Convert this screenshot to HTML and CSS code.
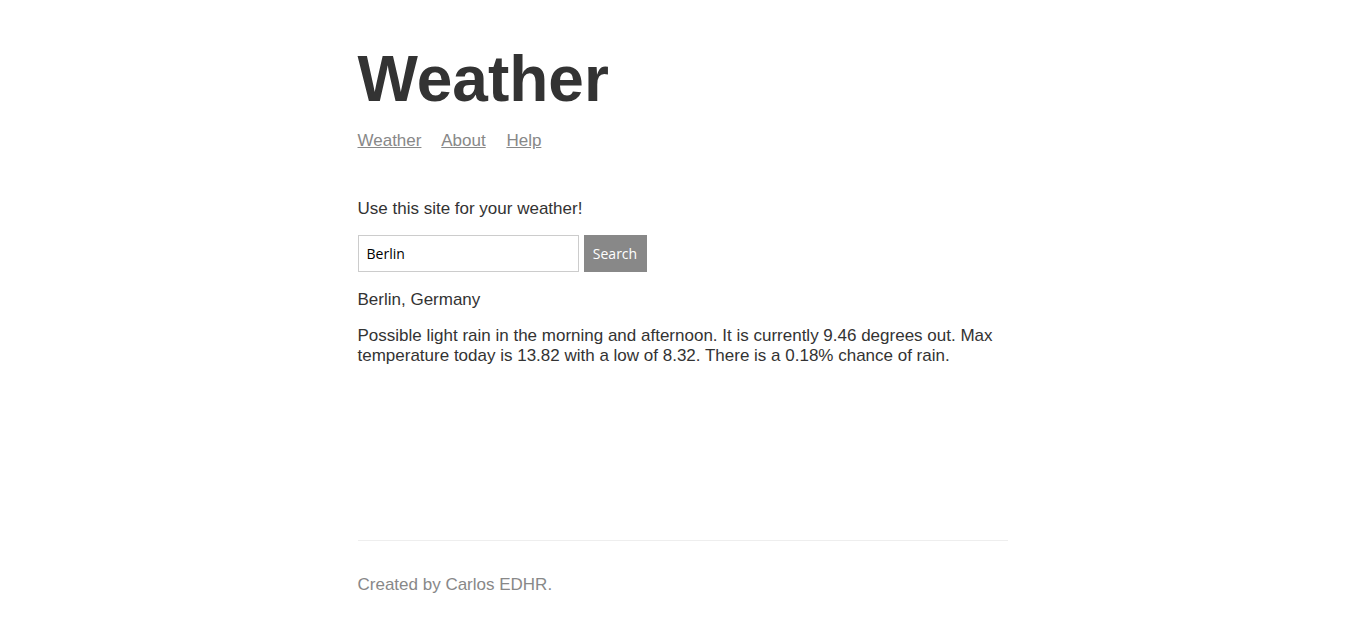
FILE: index.html
```html
<!DOCTYPE html>
<html lang="en">
<head>
<meta charset="utf-8">
<title>Weather</title>
<link rel="stylesheet" href="styles.css">
</head>
<body>
<div class="main-content">
  <header class="header">
    <h1 class="title">Weather</h1>
    <nav class="nav">
      <a class="nav-link" href="#">Weather</a>
      <a class="nav-link" href="#">About</a>
      <a class="nav-link" href="#">Help</a>
    </nav>
  </header>
  <p class="text">Use this site for your weather!</p>
  <form class="search-form">
    <input class="search-input" type="text" value="Berlin" placeholder="Location">
    <button class="search-button" type="button">Search</button>
  </form>
  <p class="text">Berlin, Germany</p>
  <p class="text">Possible light rain in the morning and afternoon. It is currently 9.46 degrees out. Max temperature today is 13.82 with a low of 8.32. There is a 0.18% chance of rain.</p>
</div>
<footer class="footer">
  <p class="footer-text">Created by Carlos EDHR.</p>
</footer>
</body>
</html>
```

FILE: styles.css
```css
html, body {
  background: #ffffff;
}

body {
  color: #333333;
  font-family: "Liberation Sans", Arial, sans-serif;
  font-size: 17px;
  max-width: 650px;
  margin: 0 auto;
  padding: 0 16px;
  display: flex;
  flex-direction: column;
  min-height: 100vh;
}

.main-content {
  flex-grow: 1;
}

.header {
  margin-top: 16px;
  margin-bottom: 48px;
}

.title {
  font-size: 64px;
  font-weight: bold;
  margin: 42px 0 15px;
}

.nav-link {
  color: #888888;
  margin-right: 16px;
  text-decoration: underline;
}

.text {
  margin: 16px 0;
}

.search-form {
  display: flex;
  align-items: flex-start;
  gap: 5px;
  height: 38.5px;
}

.search-input {
  box-sizing: border-box;
  width: 221px;
  height: 37px;
  border: 1px solid #cccccc;
  padding: 8px;
  margin: 0;
  font-family: "Open Sans", "Noto Sans", sans-serif;
  font-size: 14px;
  color: #000000;
  outline: none;
}

.search-button {
  box-sizing: border-box;
  height: 37px;
  width: 63px;
  border: 1px solid #888888;
  background: #888888;
  color: #ffffff;
  padding: 0 8px;
  margin: 0;
  font-family: "Open Sans", "Noto Sans", sans-serif;
  font-size: 14px;
  cursor: pointer;
}

.footer {
  color: #888888;
  border-top: 1px solid #eeeeee;
  margin-top: 16px;
  padding: 18px 0 13px;
}

.footer-text {
  margin: 16px 0;
}
```
